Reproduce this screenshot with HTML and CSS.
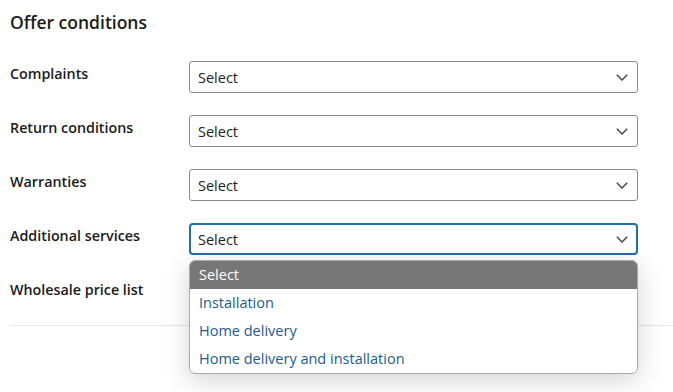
FILE: index.html
```html
<!DOCTYPE html>
<html lang="en">
<head>
<meta charset="utf-8">
<title>Offer conditions</title>
<link rel="stylesheet" href="styles.css">
</head>
<body>
<section class="panel">
  <h2 class="title">Offer conditions</h2>
  <div class="rows">
    <div class="row">
      <label class="label">Complaints</label>
      <div class="field">
        <div class="select"><span>Select</span><svg class="chev" viewBox="0 0 12 7" width="12" height="7"><path d="M0.8 0.8l5.2 5.2 5.2-5.2"/></svg></div>
      </div>
    </div>
    <div class="row">
      <label class="label">Return conditions</label>
      <div class="field">
        <div class="select"><span>Select</span><svg class="chev" viewBox="0 0 12 7" width="12" height="7"><path d="M0.8 0.8l5.2 5.2 5.2-5.2"/></svg></div>
      </div>
    </div>
    <div class="row">
      <label class="label">Warranties</label>
      <div class="field">
        <div class="select"><span>Select</span><svg class="chev" viewBox="0 0 12 7" width="12" height="7"><path d="M0.8 0.8l5.2 5.2 5.2-5.2"/></svg></div>
      </div>
    </div>
    <div class="row">
      <label class="label">Additional services</label>
      <div class="field">
        <div class="select focused"><span>Select</span><svg class="chev" viewBox="0 0 12 7" width="12" height="7"><path d="M0.8 0.8l5.2 5.2 5.2-5.2"/></svg></div>
        <ul class="menu">
          <li class="opt active">Select</li>
          <li class="opt">Installation</li>
          <li class="opt">Home delivery</li>
          <li class="opt">Home delivery and installation</li>
        </ul>
      </div>
    </div>
    <div class="row">
      <label class="label">Wholesale price list</label>
      <div class="field">
        <div class="select covered"><span>Select</span><svg class="chev" viewBox="0 0 12 7" width="12" height="7"><path d="M0.8 0.8l5.2 5.2 5.2-5.2"/></svg></div>
      </div>
    </div>
  </div>
  <hr class="divider">
</section>
</body>
</html>
```
FILE: styles.css
```css
html, body {
  margin: 0;
  padding: 0;
  background: #ffffff;
}
body {
  min-height: 392px;
  font-family: "Open Sans", "Noto Sans", "Liberation Sans", sans-serif;
  color: #1b1b1b;
}
.panel {
  box-sizing: border-box;
  min-height: 392px;
  padding: 10px 0 0 10px;
}
.title {
  margin: 0;
  font-size: 17.5px;
  line-height: 24px;
  font-weight: 600;
  color: #1b1b1b;
}
.rows {
  display: flex;
  flex-direction: column;
  gap: 22px;
  margin-top: 27px;
}
.row {
  display: grid;
  grid-template-columns: 179px 449px;
  align-items: start;
}
.label {
  font-size: 14.3px;
  font-weight: 600;
  line-height: 20px;
  padding-top: 3px;
  color: #1b1b1b;
}
.field {
  position: relative;
}
.select {
  box-sizing: border-box;
  height: 32px;
  border: 1px solid #8a8a8a;
  border-radius: 3px;
  display: flex;
  align-items: center;
  justify-content: space-between;
  padding: 0 8px 0 8px;
  font-size: 14.5px;
  color: #222;
  background: #fff;
}
.select.focused {
  border: 2px solid #1f6db3;
  border-radius: 4px;
  padding: 0 7px 0 7px;
}
.select.covered span {
  visibility: hidden;
}
.chev {
  fill: none;
  stroke: #4a4a4a;
  stroke-width: 1.5;
  margin-right: 1px;
}
.menu {
  position: absolute;
  left: 0;
  top: 37px;
  width: 449px;
  box-sizing: border-box;
  margin: 0;
  padding: 0;
  list-style: none;
  background: #fff;
  border: 1px solid #a9a9a9;
  border-radius: 6px;
  overflow: hidden;
  box-shadow: 0 6px 26px rgba(0, 0, 0, 0.18);
  z-index: 2;
}
.opt {
  height: 28px;
  line-height: 28px;
  padding: 0 9px;
  font-size: 14.5px;
  color: #1d5a91;
}
.opt.active {
  background: #777777;
  color: #ffffff;
}
.divider {
  margin: 16px 0 0 0;
  border: 0;
  border-top: 1px solid #e6e6e6;
}
```
